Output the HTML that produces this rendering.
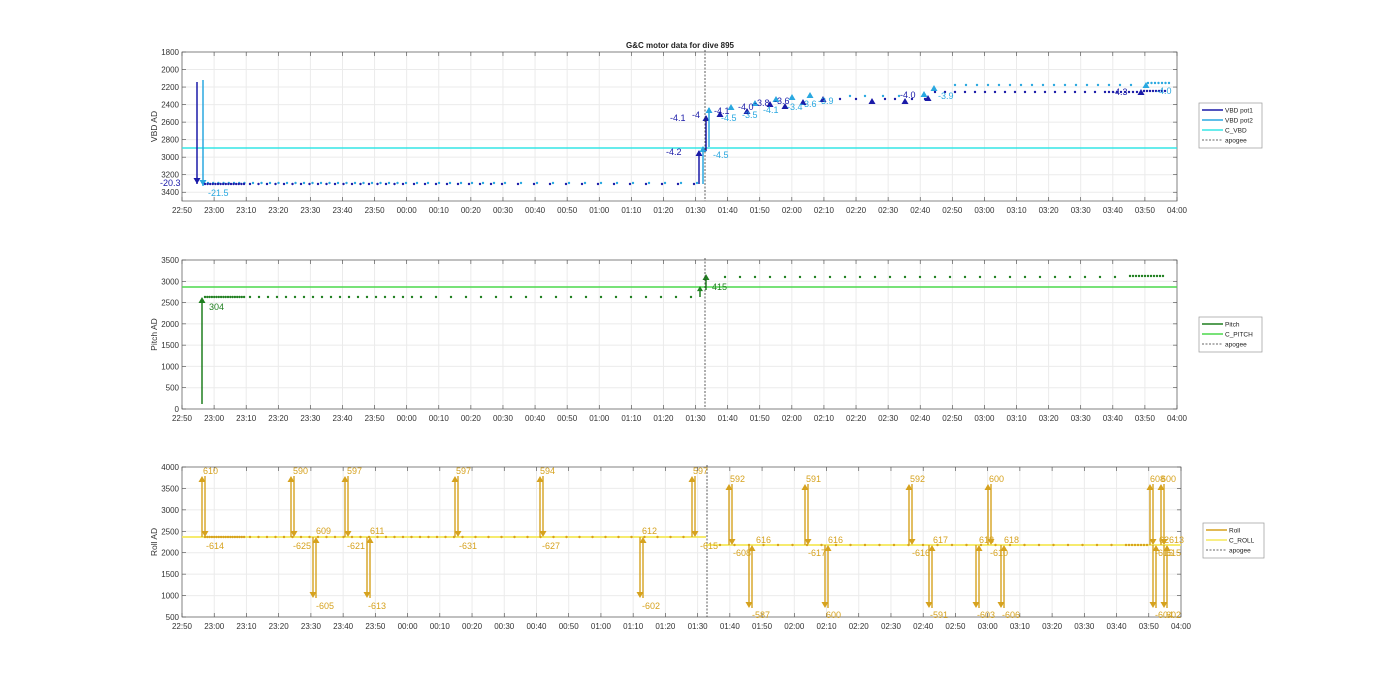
<!DOCTYPE html>
<html><head><meta charset="utf-8"><style>
html,body{margin:0;padding:0;background:#fff;}
svg{display:block;font-family:"Liberation Sans",sans-serif;}
</style></head><body>
<svg id="s" width="1400" height="693" xmlns="http://www.w3.org/2000/svg"></svg>
<script>
var S=document.getElementById('s'),h='';
function L(x1,y1,x2,y2,c,w,d){h+='<line x1="'+x1+'" y1="'+y1+'" x2="'+x2+'" y2="'+y2+'" stroke="'+c+'" stroke-width="'+(w||1)+'"'+(d?' stroke-dasharray="'+d+'"':'')+'/>';}
function T(x,y,t,c,fs,a,extra){h+='<text x="'+x+'" y="'+y+'" fill="'+c+'" font-size="'+(fs||8)+'"'+(a?' text-anchor="'+a+'"':'')+(extra||'')+'>'+t+'</text>';}
function tri(x,y,up,c,s){s=s||4;var d=up?[[x-s,y+s*1.7],[x+s,y+s*1.7],[x,y]]:[[x-s,y-s*1.7],[x+s,y-s*1.7],[x,y]];h+='<polygon points="'+d.map(p=>p.join(',')).join(' ')+'" fill="'+c+'"/>';}
function dot(x,y,c){h+='<circle cx="'+x+'" cy="'+y+'" r="1.2" fill="'+c+'"/>';}
var times=['22:50','23:00','23:10','23:20','23:30','23:40','23:50','00:00','00:10','00:20','00:30','00:40','00:50','01:00','01:10','01:20','01:30','01:40','01:50','02:00','02:10','02:20','02:30','02:40','02:50','03:00','03:10','03:20','03:30','03:40','03:50','04:00'];
function axes(x0,x1,y0,y1,yl,ylabel){
  var n=31;
  for(var i=0;i<=n;i++){var x=x0+(x1-x0)*i/n;L(x,y0,x,y1,'#ebebeb');}
  for(var j=0;j<yl.length;j++){var y=y0+(y1-y0)*yl[j][0];L(x0,y,x1,y,'#ebebeb');T(x0-3,y+3,yl[j][1],'#333',8,'end');L(x0,y,x0+4,y,'#444',0.6);L(x1,y,x1-4,y,'#444',0.6);}
  for(var i=0;i<=n;i++){var x=x0+(x1-x0)*i/n;L(x,y1,x,y1-4,'#444',0.6);L(x,y0,x,y0+4,'#444',0.6);T(x,y1+12,times[i],'#333',8,'middle');}
  h+='<rect x="'+x0+'" y="'+y0+'" width="'+(x1-x0)+'" height="'+(y1-y0)+'" fill="none" stroke="#555" stroke-width="0.7"/>';
  var cy=(y0+y1)/2;T(157,cy,ylabel,'#333',8.5,'middle',' transform="rotate(-90 157 '+cy+')"');
}
function legend(x,y,w,items){
  var hh=items.length*10+5;
  h+='<rect x="'+x+'" y="'+y+'" width="'+w+'" height="'+hh+'" fill="#fff" stroke="#999" stroke-width="0.7"/>';
  items.forEach(function(it,i){var yy=y+7+i*10;L(x+3,yy,x+24,yy,it[1],it[2],it[3]);T(x+26,yy+2.5,it[0],'#222',6.5);});
}
// ---------- TOP ----------
var tl=[];['1800','2000','2200','2400','2600','2800','3000','3200','3400'].forEach(function(v,i){tl.push([(i*200)/1700,v]);});
axes(182,1177,52,201,tl,'VBD AD');
T(680,48,'G&amp;C motor data for dive 895','#222',8,'middle',' font-weight="bold"');
var DB='#1a1aa8',LB='#2aa8e0',CY='#35e6e6';
L(182,148,1177,148,CY,1.6);
L(197,82,197,184,DB,1.5);tri(197,184,false,DB,3.5);
L(203,80,203,186,LB,1.5);tri(203,186,false,LB,3.5);
var xs=[];for(var x=205;x<245;x+=2.6)xs.push(x);
for(var x=250;x<697;x+=(x<400?8.5:(x<500?11:16)))xs.push(x);
xs.forEach(function(x,i){dot(x,184,DB);if(i%2==0||x>245)dot(x+3,183,LB);});
T(160,186,'-20.3',DB,9);T(208,196,'-21.5',LB,9);
L(699,184,699,151,DB,1.5);tri(699,150,true,DB,3.5);T(666,155,'-4.2',DB,9);
L(706,151,706,116,DB,1.5);tri(706,115,true,DB,3.5);T(670,121,'-4.1',DB,9);T(692,118,'-4',DB,9);
L(703,184,703,147,LB,1.5);tri(703,146,true,LB,3.5);T(713,158,'-4.5',LB,9);
L(709,147,709,108,LB,1.5);tri(709,107,true,LB,3.5);
L(705,50,705,201,'#333',0.8,'2,1.5');
[[720,112],[747,109],[770,102],[785,104],[803,100],[823,97],[872,99],[905,99],[928,96],[1141,90]].forEach(function(p){tri(p[0],p[1]-1,true,DB,3.5);});
[[731,105],[755,101],[776,97],[792,95],[810,93],[924,92],[934,86],[1146,83]].forEach(function(p){tri(p[0],p[1]-1,true,LB,3.5);});
[840,856,885,895,912,925].forEach(function(x){dot(x,99,DB);});
[850,865,883,899].forEach(function(x){dot(x,96,LB);});
for(var x=935;x<1140;x+=(x<1100?10:4))dot(x,92,DB);for(var x=1144;x<1168;x+=3)dot(x,91,DB);
for(var x=955;x<1140;x+=11)dot(x,85,LB);for(var x=1148;x<1170;x+=3.5)dot(x,83,LB);
[['-4.1',714,114],['-4.0',738,110],['-3.8',754,106],['-3.6',774,104],['-4.0',900,98],['-4.3',1112,95]].forEach(function(a){T(a[1],a[2],a[0],DB,9);});
[['-4.5',721,121],['-3.5',742,118],['-4.1',763,113],['-3.4',787,110],['-3.6',801,107],['-3.9',818,104],['-3.9',938,99],['-4.0',1156,94]].forEach(function(a){T(a[1],a[2],a[0],LB,9);});
legend(1199,103,63,[['VBD pot1',DB,1.6],['VBD pot2',LB,1.6],['C_VBD',CY,1.6],['apogee','#333',0.8,'2,1.5']]);
// ---------- MID ----------
var ml=[];['3500','3000','2500','2000','1500','1000','500','0'].forEach(function(v,i){ml.push([i/7,v]);});
axes(182,1177,260,409,ml,'Pitch AD');
var G='#1f7f1f',LG='#4cd94c';
L(182,287,1177,287,LG,1.6);
L(202,404,202,299,G,1.5);tri(202,297,true,G,3.5);T(209,310,'304',G,9);
var mx=[];for(var x=205;x<245;x+=2.3)mx.push(x);for(var x=250;x<697;x+=(x<420?9:15))mx.push(x);
mx.forEach(function(x){dot(x,297,G);});
L(700,297,700,289,G,1.5);tri(700,286,true,G,3);
L(706,290,706,279,G,1.5);tri(706,274,true,G,3.5);T(712,290,'415',G,9);
L(705,258,705,409,'#333',0.8,'2,1.5');
for(var x=725;x<1130;x+=(x%3==0?14:15))dot(x,277,G);for(var x=1130;x<1166;x+=3)dot(x,276,G);
legend(1199,317,63,[['Pitch',G,1.6],['C_PITCH',LG,1.6],['apogee','#333',0.8,'2,1.5']]);
// ---------- BOTTOM ----------
var bl=[];['4000','3500','3000','2500','2000','1500','1000','500'].forEach(function(v,i){bl.push([i/7,v]);});
axes(182,1181,467,617,bl,'Roll AD');
var R='#d6a21e',Y='#f5e85a';
L(182,537,706,537,Y,1.8);L(706,545,1181,545,Y,1.8);
for(var x=205;x<245;x+=2.3)dot(x,537,R);for(var x=250;x<690;x+=(x<460?8.5:13))dot(x,537,R);
for(var x=720;x<1150;x+=(x<1120?14.5:3))dot(x,545,R);
L(707,465,707,617,'#333',0.8,'2,1.5');
function ev(x,base,end){
  var up=end<base;
  L(x,base,x,end+(up?6:-6),R,1.4);tri(x,end,up,R,3.5);
  L(x+3,end,x+3,base+(up?-6:6),R,1.4);tri(x+3,base,!up,R,3.5);
}
function lab(x,y,t){T(x,y,t,R,9);}
var top3=476,top36=484,low95=598,low7=608,b1=537,b2=545;
ev(202,b1,top3);lab(203,474,'610');lab(206,549,'-614');
ev(291,b1,top3);lab(293,474,'590');lab(293,549,'-625');
ev(313,b1,low95);lab(316,534,'609');lab(316,609,'-605');
ev(345,b1,top3);lab(347,474,'597');lab(347,549,'-621');
ev(367,b1,low95);lab(370,534,'611');lab(368,609,'-613');
ev(455,b1,top3);lab(456,474,'597');lab(459,549,'-631');
ev(540,b1,top3);lab(540,474,'594');lab(542,549,'-627');
ev(640,b1,low95);lab(642,534,'612');lab(642,609,'-602');
ev(692,b1,top3);lab(693,474,'597');lab(700,549,'-615');
ev(729,b2,top36);lab(730,482,'592');lab(733,556,'-608');
ev(749,b2,low7);lab(756,543,'616');lab(752,618,'-587');
ev(805,b2,top36);lab(806,482,'591');lab(808,556,'-617');
ev(825,b2,low7);lab(828,543,'616');lab(826,618,'600');
ev(909,b2,top36);lab(910,482,'592');lab(912,556,'-616');
ev(929,b2,low7);lab(933,543,'617');lab(930,618,'-591');
ev(976,b2,low7);lab(979,543,'618');lab(977,618,'-603');
ev(988,b2,top36);lab(989,482,'600');lab(990,556,'-610');
ev(1001,b2,low7);lab(1004,543,'618');lab(1002,618,'-606');
ev(1150,b2,top36);ev(1153,b2,low7);lab(1150,482,'608');lab(1155,556,'-615');lab(1155,618,'-604');
ev(1161,b2,top36);ev(1164,b2,low7);lab(1161,482,'600');lab(1159,543,'62613');lab(1166,556,'615');lab(1166,618,'602');
legend(1203,523,61,[['Roll',R,1.6],['C_ROLL',Y,1.6],['apogee','#333',0.8,'2,1.5']]);
S.innerHTML=h;
</script>
</body></html>
